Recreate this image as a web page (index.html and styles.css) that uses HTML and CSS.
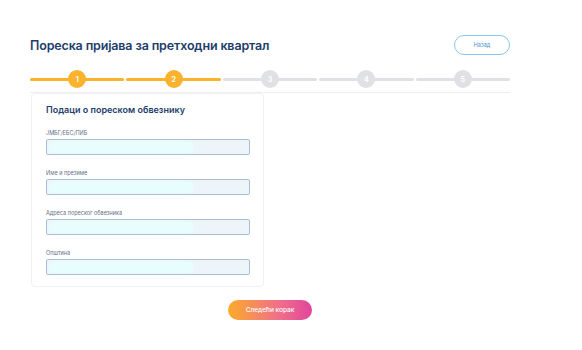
FILE: index.html
```html
<!DOCTYPE html>
<html lang="sr">
<head>
<meta charset="utf-8">
<link rel="stylesheet" href="styles.css">
</head>
<body>
<div class="page">
  <div class="header">
    <h1 class="title">Пореска пријава за претходни квартал</h1>
    <button class="back">Назад</button>
  </div>
  <div class="steps">
    <div class="step done"><span class="dot">1</span></div>
    <div class="step done"><span class="dot">2</span></div>
    <div class="step"><span class="dot">3</span></div>
    <div class="step"><span class="dot">4</span></div>
    <div class="step"><span class="dot">5</span></div>
  </div>
  <div class="card">
    <h2 class="card-title">Подаци о пореском обвезнику</h2>
    <div class="field">
      <label class="label">ЈМБГ/ЕБС/ПИБ</label>
      <div class="input"><span class="fill"></span></div>
    </div>
    <div class="field">
      <label class="label">Име и презиме</label>
      <div class="input"><span class="fill"></span></div>
    </div>
    <div class="field">
      <label class="label">Адреса пореског обвезника</label>
      <div class="input"><span class="fill"></span></div>
    </div>
    <div class="field">
      <label class="label">Општина</label>
      <div class="input"><span class="fill"></span></div>
    </div>
  </div>
  <div class="actions">
    <button class="next">Следећи корак</button>
  </div>
</div>
</body>
</html>
```
FILE: styles.css
```css
* { box-sizing: border-box; }
html, body { margin: 0; background: #fff; }
body { font-family: Inter, "Noto Sans", sans-serif; }
.page {
  width: 480px;
  margin-left: 30px;
  padding-top: 35px;
}
.header {
  display: flex;
  align-items: center;
  justify-content: space-between;
  height: 20px;
}
.title {
  margin: 0;
  font-size: 12.5px;
  font-weight: 600;
  color: #1d3d6b;
  letter-spacing: -0.15px;
}
.back {
  width: 56px;
  height: 20px;
  border: 1px solid #86c7ee;
  border-radius: 10px;
  background: #fff;
  color: #4e8fc8;
  font-family: Inter, sans-serif;
  font-size: 5.5px;
  padding: 0;
}
.steps {
  display: flex;
  gap: 2px;
  margin-top: 15px;
  height: 23px;
  border-bottom: 1px solid #eceef1;
}
.step {
  flex: 1;
  position: relative;
  display: flex;
  justify-content: center;
  height: 18px;
  align-items: center;
}
.step::before {
  content: "";
  position: absolute;
  left: 0;
  right: 0;
  top: 8px;
  height: 3px;
  background: #dfe1e5;
  border-radius: 2px;
}
.step.done::before { background: #fbb22d; }
.dot {
  position: relative;
  width: 18px;
  height: 18px;
  border-radius: 50%;
  background: #dfe1e5;
  color: #fff;
  font-size: 7px;
  font-weight: 700;
  display: flex;
  align-items: center;
  justify-content: center;
}
.step.done .dot { background: #fbb22d; }
.card {
  width: 233px;
  margin-left: 1px;
  border: 1px solid #f0f1f3;
  border-radius: 4px;
  padding: 10px 13px 11px 14px;
}
.card-title {
  margin: 0 0 14px;
  font-size: 9px;
  line-height: 11px;
  font-weight: 600;
  color: #1d3d6b;
}
.field + .field { margin-top: 14px; }
.label {
  display: block;
  font-size: 5.5px;
  line-height: 8px;
  color: #5f7089;
  margin-bottom: 2px;
}
.input {
  height: 16px;
  border: 1px solid #a7c1da;
  border-radius: 2px;
  background: #eef5fa;
  padding: 1px 2px;
}
.fill {
  display: block;
  width: 145px;
  height: 12px;
  border-radius: 6px;
  background: #e8fdfe;
}
.actions {
  display: flex;
  justify-content: center;
  margin-top: 13px;
}
.next {
  width: 84px;
  height: 20px;
  border: none;
  border-radius: 10px;
  background: linear-gradient(90deg, #fbab2a 0%, #f0708a 60%, #e0459c 100%);
  color: #fff;
  font-family: Inter, sans-serif;
  font-size: 6.5px;
  font-weight: 500;
  padding: 0;
}
```
